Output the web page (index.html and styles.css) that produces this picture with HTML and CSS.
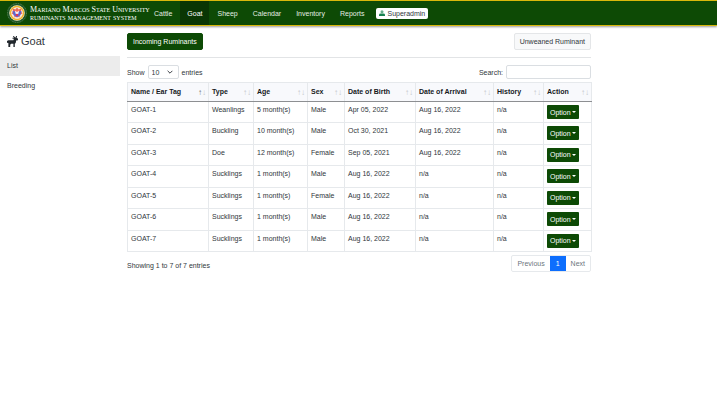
FILE: index.html
```
<!DOCTYPE html>
<html lang="en">
<head>
<meta charset="utf-8">
<title>Goat - Ruminants Management System</title>
<link rel="stylesheet" href="styles.css">
</head>
<body>
<header class="topbar">
  <a class="brand" href="#">
    <svg class="seal" viewBox="0 0 40 40" aria-hidden="true">
      <circle cx="20" cy="20" r="19" fill="#1c5524" stroke="#5f8560" stroke-width="2" stroke-dasharray="2 1.5"/>
      <circle cx="20" cy="20" r="15.5" fill="#f7f2dc"/>
      <circle cx="20" cy="20" r="13" fill="none" stroke="#efb32c" stroke-width="3"/>
      <circle cx="20" cy="20" r="11" fill="#f8e6dc"/>
      <path d="M20 9l3 4 6-2-1 6 3 4-5 2-1 6-5-3-5 3-1-6-5-2 3-4-1-6 6 2z" fill="#ee6a55"/>
      <path d="M11 16l6 1 3 4 3-4 6-1-2 8-7 5-7-5z" fill="#5b66d0"/>
      <path d="M16 15l4 3 4-3-1 6-3 3-3-3z" fill="#f7eff2"/>
      <circle cx="20" cy="24" r="2.5" fill="#df3552"/>
    </svg>
    <span class="brand-text">
      <span class="brand-line">Mariano Marcos State University</span>
      <span class="brand-line">ruminants management system</span>
    </span>
  </a>
  <nav class="menu">
    <a href="#">Cattle</a>
    <a href="#" class="active">Goat</a>
    <a href="#">Sheep</a>
    <a href="#">Calendar</a>
    <a href="#">Inventory</a>
    <a href="#">Reports</a>
  </nav>
  <button class="user" type="button">
    <svg viewBox="0 0 14 14" aria-hidden="true"><circle cx="7" cy="4" r="3.5" fill="#68ad8b"/><path d="M0 14V11q0-3 4-3h6q4 0 4 3v3z" fill="#17814f"/></svg>
    Superadmin
  </button>
</header>
<div class="layout">
  <aside class="sidebar">
    <h1 class="title">
      <svg viewBox="0 0 24 24" aria-hidden="true"><path d="M0 11l3-2h11l1-3h-3V4h3L13 0h2l3 4 2-4h2l-1 4 3 2v3l-4 1-1 5-2 2v7h-3v-7H9l-2 2v5H3v-8l-1-2-1 1H0z" fill="#20262c"/></svg>
      Goat
    </h1>
    <nav class="side-menu">
      <a href="#" class="active">List</a>
      <a href="#">Breeding</a>
    </nav>
  </aside>
  <main class="content">
    <div class="actions">
      <button class="btn btn-green" type="button">Incoming Ruminants</button>
      <button class="btn btn-light" type="button">Unweaned Ruminant</button>
    </div>
    <div class="filters">
      <label class="control">Show
        <span class="select-wrap">
          <select><option>10</option><option>25</option><option>50</option></select>
          <svg viewBox="0 0 10 10" aria-hidden="true"><path d="M1 3l4 4 4-4" fill="none" stroke="#343a40" stroke-width="1.6"/></svg>
        </span>
        entries</label>
      <label class="control">Search: <input type="search"></label>
    </div>
    <table class="records">
      <thead>
        <tr>
          <th class="c-name sorted">Name / Ear Tag</th>
          <th class="c-type">Type</th>
          <th class="c-age">Age</th>
          <th class="c-sex">Sex</th>
          <th class="c-birth">Date of Birth</th>
          <th class="c-arrival">Date of Arrival</th>
          <th class="c-history">History</th>
          <th class="c-action">Action</th>
        </tr>
      </thead>
      <tbody>
        <tr><td>GOAT-1</td><td>Weanlings</td><td>5 month(s)</td><td>Male</td><td>Apr 05, 2022</td><td>Aug 16, 2022</td><td>n/a</td><td><button class="option" type="button">Option</button></td></tr>
        <tr><td>GOAT-2</td><td>Buckling</td><td>10 month(s)</td><td>Male</td><td>Oct 30, 2021</td><td>Aug 16, 2022</td><td>n/a</td><td><button class="option" type="button">Option</button></td></tr>
        <tr><td>GOAT-3</td><td>Doe</td><td>12 month(s)</td><td>Female</td><td>Sep 05, 2021</td><td>Aug 16, 2022</td><td>n/a</td><td><button class="option" type="button">Option</button></td></tr>
        <tr><td>GOAT-4</td><td>Sucklings</td><td>1 month(s)</td><td>Male</td><td>Aug 16, 2022</td><td>n/a</td><td>n/a</td><td><button class="option" type="button">Option</button></td></tr>
        <tr><td>GOAT-5</td><td>Sucklings</td><td>1 month(s)</td><td>Female</td><td>Aug 16, 2022</td><td>n/a</td><td>n/a</td><td><button class="option" type="button">Option</button></td></tr>
        <tr><td>GOAT-6</td><td>Sucklings</td><td>1 month(s)</td><td>Male</td><td>Aug 16, 2022</td><td>n/a</td><td>n/a</td><td><button class="option" type="button">Option</button></td></tr>
        <tr><td>GOAT-7</td><td>Sucklings</td><td>1 month(s)</td><td>Male</td><td>Aug 16, 2022</td><td>n/a</td><td>n/a</td><td><button class="option" type="button">Option</button></td></tr>
      </tbody>
    </table>
    <div class="table-footer">
      <span>Showing 1 to 7 of 7 entries</span>
      <nav class="pages">
        <a href="#">Previous</a>
        <a href="#" class="current">1</a>
        <a href="#">Next</a>
      </nav>
    </div>
  </main>
</div>
</body>
</html>
```
FILE: styles.css
```
* { box-sizing: border-box; }
body {
  margin: 0;
  background: #fff;
  color: #30363b;
  font: 7px/11px "Liberation Sans", Arial, sans-serif;
}
a { color: inherit; text-decoration: none; }
button, input, select { font: inherit; color: inherit; margin: 0; }

.topbar {
  display: flex;
  align-items: center;
  height: 26px;
  padding-left: 7px;
  background: #0d4a05;
  border-top: 1px solid #d9b80c;
  border-bottom: 1px solid #d9b80c;
  box-shadow: 0 1px 2px #999;
  color: #e4ece2;
}
.brand { display: flex; align-items: center; gap: 3px; color: #fff; }
.seal { width: 20px; height: 20px; }
.brand-text { width: 117px; padding-top: 1px; }
.brand-line {
  display: block;
  font: 8px/8px "Liberation Serif", "Times New Roman", serif;
  font-variant: small-caps;
  white-space: nowrap;
}
.menu { display: flex; align-self: stretch; gap: 1px; }
.menu a { display: flex; align-items: center; padding: 0 7px; }
.menu .active { background: #0a3604; color: #fff; }
.user {
  display: flex;
  align-items: center;
  gap: 2px;
  height: 11px;
  margin-left: 5px;
  padding: 0 3px;
  border: 0;
  border-radius: 2px;
  background: #fff;
  color: #30363b;
}
.user svg { width: 6px; height: 6px; }

.layout { display: flex; gap: 7px; }
.sidebar { flex: 0 0 120px; }
.title {
  display: flex;
  align-items: center;
  gap: 3px;
  height: 30px;
  margin: 0;
  padding-left: 7px;
  font-size: 11px;
  font-weight: 400;
}
.title svg { width: 11px; height: 11px; }
.side-menu a { display: block; padding: 4px 7px; line-height: 12px; }
.side-menu .active { background: #ececec; }

.content { flex: 1; max-width: 464px; padding-top: 7px; }
.actions {
  display: flex;
  justify-content: space-between;
  padding-bottom: 7px;
  border-bottom: 1px solid #e2e4e6;
}
.btn { height: 17px; padding: 0 5px; border: 1px solid; border-radius: 2px; }
.btn-green { background: #0d4a05; border-color: #0d4a05; color: #fff; }
.btn-light { background: #f8f9fa; border-color: #e4e6e8; }
.filters {
  display: flex;
  justify-content: space-between;
  padding: 7px 0 3px;
}
.control { display: flex; align-items: center; gap: 3px; }
.select-wrap { position: relative; display: flex; }
.select-wrap svg {
  position: absolute;
  right: 6px;
  top: 4px;
  width: 6px;
  height: 6px;
  pointer-events: none;
}
select, input {
  height: 14px;
  border: 1px solid #dadee2;
  border-radius: 2px;
  background: #fff;
  appearance: none;
}
select { width: 31px; padding: 0 3px; }
input { width: 85px; }

.records {
  width: 100%;
  height: 170px;
  table-layout: fixed;
  border-collapse: collapse;
}
.records th, .records td {
  padding: 2px 3px;
  border: 1px solid #e6e9ec;
  text-align: left;
  vertical-align: top;
  white-space: nowrap;
}
.records thead tr { height: 19px; }
.records th {
  position: relative;
  padding-top: 3px;
  background: #f8f9fc;
  border-bottom-color: #8d8f92;
  color: #16191c;
}
.records th::before, .records th::after {
  position: absolute;
  top: 4px;
  color: #c3c6ca;
  font-size: 8px;
  font-weight: 400;
}
.records th::before { content: "↑"; right: 6px; }
.records th::after { content: "↓"; right: 2px; }
.records .sorted::before { color: #6f7276; }
.c-name { width: 81px; }
.c-type { width: 45px; }
.c-age { width: 54px; }
.c-sex { width: 37px; }
.c-birth { width: 71px; }
.c-arrival { width: 78px; }
.c-history { width: 50px; }
.c-action { width: 48px; }
.option {
  display: flex;
  align-items: center;
  gap: 1px;
  height: 14px;
  margin-top: 1px;
  padding: 0 3px;
  border: 0;
  border-radius: 1px;
  background: #0d4a05;
  color: #fff;
}
.option::after {
  content: "";
  border: 2px solid transparent;
  border-top-color: #fff;
  border-bottom: 0;
}

.table-footer { display: flex; justify-content: space-between; padding-top: 3px; }
.table-footer > span { padding-top: 5px; }
.pages { display: flex; border: 1px solid #e6e9ec; border-radius: 2px; color: #6c757d; }
.pages a { padding: 2px 5px; }
.pages .current { padding: 2px 6px; background: #0d6efd; color: #fff; }
```
